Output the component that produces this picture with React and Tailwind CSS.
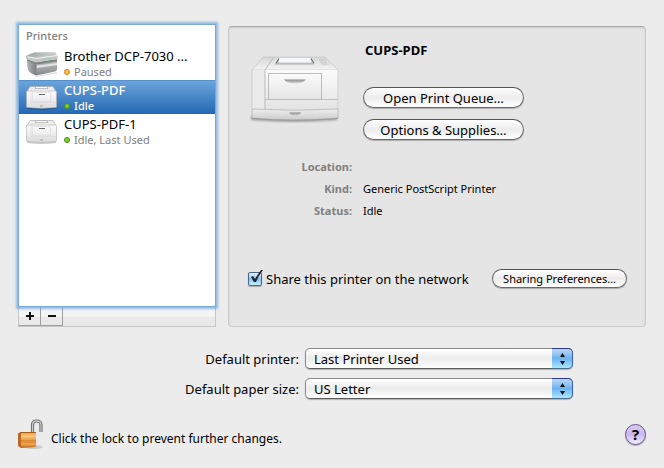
import React, { useState } from 'react';

const PRINTERS = [
  { id: 'brother', name: 'Brother DCP-7030 ...', status: 'Paused', color: 'orange', icon: 'brother' },
  { id: 'cups', name: 'CUPS-PDF', status: 'Idle', color: 'green', icon: 'laser' },
  { id: 'cups1', name: 'CUPS-PDF-1', status: 'Idle, Last Used', color: 'green', icon: 'laser' },
];

function BrotherIcon() {
  return (
    <svg width="34" height="26" viewBox="0 0 34 26" className="shrink-0" aria-hidden="true">
      <defs>
        <linearGradient id="brFront" x1="0" y1="0" x2="0" y2="1">
          <stop offset="0" stopColor="#b9bcbb" />
          <stop offset="0.6" stopColor="#9b9f9f" />
          <stop offset="1" stopColor="#7f8384" />
        </linearGradient>
        <linearGradient id="brTop" x1="0" y1="0" x2="1" y2="0">
          <stop offset="0" stopColor="#a3a7a5" />
          <stop offset="1" stopColor="#c9cdcb" />
        </linearGradient>
        <linearGradient id="brSide" x1="0" y1="0" x2="1" y2="0">
          <stop offset="0" stopColor="#b3b6b6" />
          <stop offset="1" stopColor="#7b7f80" />
        </linearGradient>
      </defs>
      <path d="M4 22 L10 25 L32 21 V22.500 L11 26 Z" fill="#000" opacity="0.12" />
      <path d="M2 9 L11 13 V24.500 Q5 22 3.500 20 Q2 17 2 9 Z" fill="url(#brSide)" />
      <path d="M11 13 L32 10 V18 Q32 20 30 20.500 L11 24.500 Z" fill="url(#brFront)" />
      <path d="M12 14.500 L32 12 V14 L12 17 Z" fill="#e1e3e2" />
      <path d="M2 8 L11 11 L32 8 V10.500 L11 13.500 L2 9.500 Z" fill="#7d8281" />
      <path d="M1 5 L9 1.500 H30 L32.500 5 V8 L11 11.500 L1 8 Z" fill="#c3c7c5" />
      <path d="M1 5 L9 1.500 H30 L31 3 L11 6 Z" fill="url(#brTop)" />
      <path d="M3 6 L11 7.500 L32 4.500" fill="none" stroke="#edf0ee" strokeWidth="1.200" />
      <path d="M18 8.500 L26 7.200" stroke="#93d3ae" strokeWidth="1" />
    </svg>
  );
}

function SmallLaserIcon() {
  return (
    <svg width="34" height="26" viewBox="0 0 34 26" className="shrink-0" aria-hidden="true">
      <defs>
        <linearGradient id="slFront" x1="0" y1="0" x2="0" y2="1">
          <stop offset="0" stopColor="#fdfdfd" />
          <stop offset="1" stopColor="#dedede" />
        </linearGradient>
      </defs>
      <path d="M2 22 H31 V24 Q17 26 2 24 Z" fill="#000" opacity="0.2" />
      <path d="M5 1.500 H28 L31 6.500 H2 Z" fill="#efefef" stroke="#a5a5a5" strokeWidth="0.6" />
      <path d="M11 1.500 H22 L23 3.500 H10 Z" fill="#fafcfe" stroke="#999" strokeWidth="0.6" />
      <path d="M1.500 7 Q1.500 6 2.500 6 H30.500 Q31.500 6 31.500 7 V21.500 Q31.500 22.500 30.500 22.500 Q17 24 2.500 22.500 Q1.500 22.500 1.500 21.500 Z" fill="url(#slFront)" stroke="#b0b0b0" strokeWidth="0.6" />
      <path d="M7.500 3 L6 6 V18.500 M7.500 7.500 H25.500 V16.500 H7.500 Z M6 17.500 H31 M2 20 H31" fill="none" stroke="#d6d6d6" strokeWidth="0.6" />
      <path d="M14 9.500 H20" stroke="#666" strokeWidth="1" />
      <path d="M15 21 H18" stroke="#888" strokeWidth="0.7" />
    </svg>
  );
}

function LargePrinterIcon() {
  return (
    <svg width="94" height="72" viewBox="0 0 94 72" className="shrink-0" aria-hidden="true">
      <defs>
        <linearGradient id="lpTop" x1="0" y1="0" x2="0" y2="1">
          <stop offset="0" stopColor="#d6d6d6" />
          <stop offset="1" stopColor="#f5f5f5" />
        </linearGradient>
        <linearGradient id="lpFront" x1="0" y1="0" x2="0" y2="1">
          <stop offset="0" stopColor="#fbfbfb" />
          <stop offset="1" stopColor="#e4e4e4" />
        </linearGradient>
        <linearGradient id="lpTray" x1="0" y1="0" x2="0" y2="1">
          <stop offset="0" stopColor="#efefef" />
          <stop offset="1" stopColor="#cbcbcb" />
        </linearGradient>
        <linearGradient id="lpHandle" x1="0" y1="0" x2="0" y2="1">
          <stop offset="0" stopColor="#8a8a8a" />
          <stop offset="1" stopColor="#dcdcdc" />
        </linearGradient>
        <filter id="lpBlur">
          <feGaussianBlur stdDeviation="1" />
        </filter>
      </defs>
      <path d="M4 63 H90 V67 Q47 71 4 67 Z" fill="#000" opacity="0.3" filter="url(#lpBlur)" />
      <path d="M16 4 H78 L91 17 H5 Z" fill="url(#lpTop)" stroke="#c4c4c4" strokeWidth="0.7" />
      <path d="M5 17 H18 V56 L5 55 Z" fill="#ebebeb" />
      <path d="M18 17 H91 V56 H18 Z" fill="url(#lpFront)" />
      <path d="M5 17 V55 M91 17 V56" stroke="#c4c4c4" strokeWidth="0.7" />
      <path d="M27 4 L18 17 V56" fill="none" stroke="#b4b4b4" strokeWidth="0.9" />
      <path d="M32 5 H64 L66 11 H29 Z" fill="#cacaca" />
      <path d="M32 5 H64 V9.500 H32 Z" fill="#f4f7fb" />
      <path d="M29 10.500 L32 5.500 M67 10.500 L64 5.500" stroke="#666" strokeWidth="1.100" />
      <path d="M28 11 H67" stroke="#aaa" strokeWidth="0.9" />
      <path d="M72 7 H79 M73 9 H80 M74 11 H82" stroke="#c6c6c6" strokeWidth="1.100" />
      <path d="M21.500 20.500 H74.500 V46.500 H21.500 Z" fill="url(#lpFront)" stroke="#b4b4b4" strokeWidth="0.9" />
      <path d="M37 26.500 H59 Q56 30.500 48 30.500 Q40 30.500 37 26.500 Z" fill="url(#lpHandle)" />
      <path d="M18 46.500 H91" stroke="#bdbdbd" strokeWidth="0.9" />
      <path d="M5 56 Q48 58.500 91 56 V65 Q48 69 5 65 Z" fill="url(#lpTray)" stroke="#b5b5b5" strokeWidth="0.8" />
      <path d="M42 59.500 H54 Q52 63 48 63 Q44 63 42 59.500 Z" fill="url(#lpHandle)" />
      <path d="M5 65.500 Q48 69 91 65.500" fill="none" stroke="#999" strokeWidth="0.9" />
    </svg>
  );
}

function LockIcon() {
  return (
    <svg width="28" height="32" viewBox="0 0 28 32" aria-hidden="true">
      <defs>
        <linearGradient id="lockBody" x1="0" y1="0" x2="0" y2="1">
          <stop offset="0" stopColor="#f2a64c" />
          <stop offset="0.3" stopColor="#ffd08a" />
          <stop offset="0.5" stopColor="#e0892e" />
          <stop offset="0.75" stopColor="#f0a650" />
          <stop offset="1" stopColor="#b5611a" />
        </linearGradient>
      </defs>
      <ellipse cx="16" cy="29" rx="9" ry="2" fill="#000" opacity="0.13" />
      <path d="M14.500 16 V7 Q14.500 3 18.500 3 Q23 3 23 7 V14" fill="none" stroke="#666" strokeWidth="3.200" />
      <path d="M14.500 16 V7 Q14.500 3 18.500 3 Q23 3 23 7 V14" fill="none" stroke="#cdcdcd" strokeWidth="1.300" />
      <path d="M0 16 L3 14 V30 L0 28 Z" fill="#b86a24" />
      <path d="M3 15 H18 V29 L3 30 Z" fill="url(#lockBody)" />
      <path d="M0 16 L3 14.500 H18" fill="none" stroke="#a55a1b" strokeWidth="1" />
      <path d="M3 20 H18 M3 24.500 H18" stroke="#d9883a" strokeWidth="0.6" />
    </svg>
  );
}

function StatusDot({ color }) {
  return (
    <span
      className={`w-[6px] h-[6px] rounded-full border ${
        color === 'orange' ? 'bg-[#ffc33c] border-[#d97a24]' : 'bg-[#7ed321] border-[#3f8a1c]'
      }`}
    />
  );
}

function PrinterRow({ printer, selected, onSelect }) {
  return (
    <button
      onClick={() => onSelect(printer.id)}
      className={`w-full h-[34px] flex items-center gap-[5px] pl-[6px] text-left ${
        selected ? 'bg-linear-to-b from-[#6ba4dc] to-[#2268b3] border-t border-[#5590cb]' : 'border-t border-transparent'
      }`}
    >
      {printer.icon === 'brother' ? <BrotherIcon /> : <SmallLaserIcon />}
      <span className="min-w-0">
        <span className={`block text-[13px] leading-[17px] whitespace-nowrap ${selected ? 'text-white font-medium' : 'text-black'}`}>
          {printer.name}
        </span>
        <span className={`flex items-center gap-1 text-[11px] leading-[14px] ${selected ? 'text-white font-medium' : 'text-[#808080]'}`}>
          <StatusDot color={printer.color} />
          {printer.status}
        </span>
      </span>
    </button>
  );
}

function PillButton({ small, children }) {
  return (
    <button
      className={`rounded-full border border-[#6b6b6b] border-t-[#555] bg-linear-to-b from-white via-[#ececec] to-white shadow-[0_1px_1px_rgba(0,0,0,0.25)] whitespace-nowrap ${
        small ? 'w-[135px] h-[19px] text-[11px] leading-[16px]' : 'w-[161px] h-[21px] text-[13px] leading-[18px]'
      }`}
    >
      {children}
    </button>
  );
}

function Popup({ id, options }) {
  return (
    <div className="relative w-[268px] h-[21px]">
      <select
        id={id}
        className="appearance-none w-full h-full pl-2 pr-6 rounded-[5px] border border-[#8a8a8a] border-b-[#5c5c5c] bg-linear-to-b from-white via-[#ececec] to-white shadow-[0_1px_1px_rgba(0,0,0,0.25)] text-[13px] leading-[18px] outline-none"
      >
        {options.map((o) => (
          <option key={o}>{o}</option>
        ))}
      </select>
      <span className="absolute top-0 right-0 w-[21px] h-full rounded-r-[5px] border-t border-r border-b border-t-[#26369c] border-r-[#3b62b3] border-b-[#4b6b8c] bg-linear-to-b from-[#bcd9f4] via-[#6db3ef] to-[#a9e6ff] flex items-center justify-center pointer-events-none">
        <svg width="7" height="14" viewBox="0 0 7 14" aria-hidden="true">
          <path d="M3.500 1 L6 5 H1 Z M3.500 13 L6 9 H1 Z" fill="#111" />
        </svg>
      </span>
    </div>
  );
}

export default function App() {
  const [selectedId, setSelectedId] = useState('cups');
  const [shared, setShared] = useState(true);

  const selected = PRINTERS.find((p) => p.id === selectedId);

  return (
    <div className="min-h-screen bg-[#ececec] px-[18px] pt-[24px] text-black font-['Noto_Sans','Open_Sans',sans-serif]">
      <div className="flex gap-3">
        <div className="w-[198px] shrink-0 flex flex-col">
          <div className="flex-1 bg-white border border-[#78a7d8] shadow-[0_0_2px_2px_rgba(110,165,220,0.7)] z-10">
            <h2 className="h-[21px] pl-[7px] pt-[3px] text-[11px] leading-[16px] font-medium text-[#808080]">Printers</h2>
            {PRINTERS.map((p) => (
              <PrinterRow key={p.id} printer={p} selected={p.id === selectedId} onSelect={setSelectedId} />
            ))}
          </div>
          <div className="flex h-[20px] border border-t-0 border-[#c6c6c6] bg-linear-to-b from-[#f4f4f4] from-50% to-[#e9e9e9] to-50%">
            <button aria-label="Add printer" className="w-[22px] border-r border-b border-[#a0a0a0] flex items-center justify-center">
              <svg width="8" height="8" viewBox="0 0 8 8" aria-hidden="true">
                <path d="M4 0 V8 M0 4 H8" stroke="#111" strokeWidth="2" />
              </svg>
            </button>
            <button aria-label="Remove printer" className="w-[22px] border-r border-b border-[#a0a0a0] flex items-center justify-center">
              <svg width="8" height="8" viewBox="0 0 8 8" aria-hidden="true">
                <path d="M0 4 H8" stroke="#111" strokeWidth="2" />
              </svg>
            </button>
          </div>
        </div>

        <section className="flex-1 mt-[2px] pb-[38px] rounded-[4px] border border-[#cbcbcb] border-t-[#a9a9a9] bg-[#e5e5e5] shadow-[inset_0_1px_2px_rgba(0,0,0,0.12)]">
          <div className="flex">
            <div className="w-[134px] pl-[18px] pt-[26px]">
              <LargePrinterIcon />
            </div>
            <div className="pt-[14px]">
              <h1 className="pl-[2px] text-[13px] leading-[18px] font-bold">{selected.name}</h1>
              <div className="mt-[28px] flex flex-col gap-[11px]">
                <PillButton>Open Print Queue…</PillButton>
                <PillButton>Options &amp; Supplies…</PillButton>
              </div>
            </div>
          </div>

          <dl className="mt-4 grid grid-cols-[123px_1fr] gap-x-[11px] text-[11px] leading-[22px]">
            <dt className="text-right font-bold text-[#808080]">Location:</dt>
            <dd></dd>
            <dt className="text-right font-bold text-[#808080]">Kind:</dt>
            <dd>Generic PostScript Printer</dd>
            <dt className="text-right font-bold text-[#808080]">Status:</dt>
            <dd>{selected.status}</dd>
          </dl>

          <div className="mt-[47px] pl-[19px] pr-[18px] flex items-center justify-between">
            <label className="flex items-center gap-1 text-[13px] leading-[18px] whitespace-nowrap">
              <span className="relative flex">
                <input
                  type="checkbox"
                  checked={shared}
                  onChange={(e) => setShared(e.target.checked)}
                  className="appearance-none w-[14px] h-[14px] rounded-[2px] border border-[#4b648c] bg-linear-to-b from-[#e5f1fb] via-[#8cc4f0] to-[#c0f1ff] shadow-[0_1px_1px_rgba(0,0,0,0.25)]"
                />
                {shared && (
                  <svg width="16" height="16" viewBox="0 0 16 16" className="absolute bottom-0 left-0 pointer-events-none" aria-hidden="true">
                    <path d="M3 7 L5 6 L7 9 Q10 4 13 0 L15 0 Q11 5 8 12 L6 12 Z" fill="#1f2430" />
                  </svg>
                )}
              </span>
              Share this printer on the network
            </label>
            <PillButton small>Sharing Preferences…</PillButton>
          </div>
        </section>
      </div>

      <div className="mt-[21px] grid grid-cols-[281px_1fr] gap-x-[6px] gap-y-[9px] items-center text-[13px] leading-[18px]">
        <label htmlFor="default-printer" className="text-right">Default printer:</label>
        <Popup id="default-printer" options={['Last Printer Used', 'CUPS-PDF', 'CUPS-PDF-1']} />
        <label htmlFor="paper-size" className="text-right">Default paper size:</label>
        <Popup id="paper-size" options={['US Letter', 'US Legal', 'A4']} />
      </div>

      <footer className="mt-[19px] flex items-center gap-[5px] text-[12px] leading-[16px]">
        <button aria-label="Lock">
          <LockIcon />
        </button>
        <span className="flex-1 pt-[10px]">Click the lock to prevent further changes.</span>
        <button
          aria-label="Help"
          className="w-[21px] h-[21px] rounded-full border border-[#65508a] bg-linear-to-b from-[#d9cdf0] via-[#cbb7f0] to-[#f5eeff] shadow-[0_1px_1px_rgba(0,0,0,0.3)] text-[15px] leading-[18px] font-bold"
        >
          ?
        </button>
      </footer>
    </div>
  );
}
